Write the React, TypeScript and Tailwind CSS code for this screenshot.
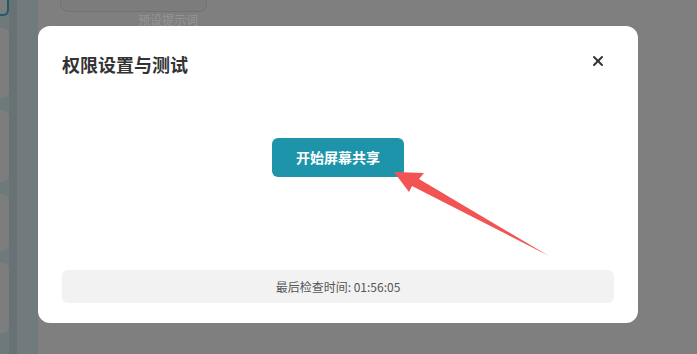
import React from 'react';
import { X } from 'lucide-react';

const font = { fontFamily: '"Noto Sans CJK SC", "Noto Sans", sans-serif' };

export default function App() {
  return (
    <div className="relative w-[697px] h-[354px] overflow-hidden bg-[#7f7f7f]" style={font}>
      {/* page behind the overlay */}
      <div className="flex h-full">
        <div className="w-[9px] bg-[#6e797b] flex flex-col gap-[12px] pt-0">
          <div className="h-[20px] -mt-[4px] rounded-br-[6px] bg-[#7d7d7d] border-r-2 border-b-2 border-[#1d5c68]" />
          <div className="h-[70px] rounded-r-[6px] bg-[#7d7d7d]" />
          <div className="h-[72px] rounded-r-[6px] bg-[#7d7d7d]" />
          <div className="h-[57px] rounded-r-[6px] bg-[#7d7d7d]" />
          <div className="h-[70px] rounded-r-[6px] bg-[#7d7d7d]" />
        </div>
        <div className="w-[8px] bg-[#687274]" />
        <div className="w-[21px] bg-[#717b7e]" />
        <div className="flex-1 pl-[22px]">
          <div className="w-[147px] h-[16px] -mt-[4px] rounded-b-[8px] border border-[#727272] bg-[#7c7c7c]" />
          <div className="ml-[78px] text-[12px] leading-[14px] mt-[1px] text-[#959595]">预设提示词</div>
        </div>
      </div>

      {/* modal */}
      <div className="absolute left-[38px] top-[26px] w-[600px] h-[297px] bg-white rounded-[12px] flex flex-col px-6 pt-6 pb-5">
        <div className="flex items-center justify-between h-[28px]">
          <h2 className="text-[18px] font-bold text-[#333]">权限设置与测试</h2>
          <X size={16} strokeWidth={3} className="text-[#333] mr-[8px] -mt-[6px]" />
        </div>
        <div className="flex justify-center mt-[60px]">
          <button className="w-[132px] h-[39px] rounded-[6px] bg-[#1e94ab] text-white text-[14px] font-bold">开始屏幕共享</button>
        </div>
        <div className="flex-1" />
        <div className="h-[33px] rounded-[6px] bg-[#f2f2f2] flex items-center justify-center text-[12px] text-[#555]">
          最后检查时间: 01:56:05
        </div>
      </div>

      {/* annotation arrow */}
      <svg className="absolute inset-0" width="697" height="354" viewBox="0 0 697 354">
        <polygon points="394,172 424,173 419,179 549,256 412,186 409,192" fill="#f25454" />
      </svg>
    </div>
  );
}
